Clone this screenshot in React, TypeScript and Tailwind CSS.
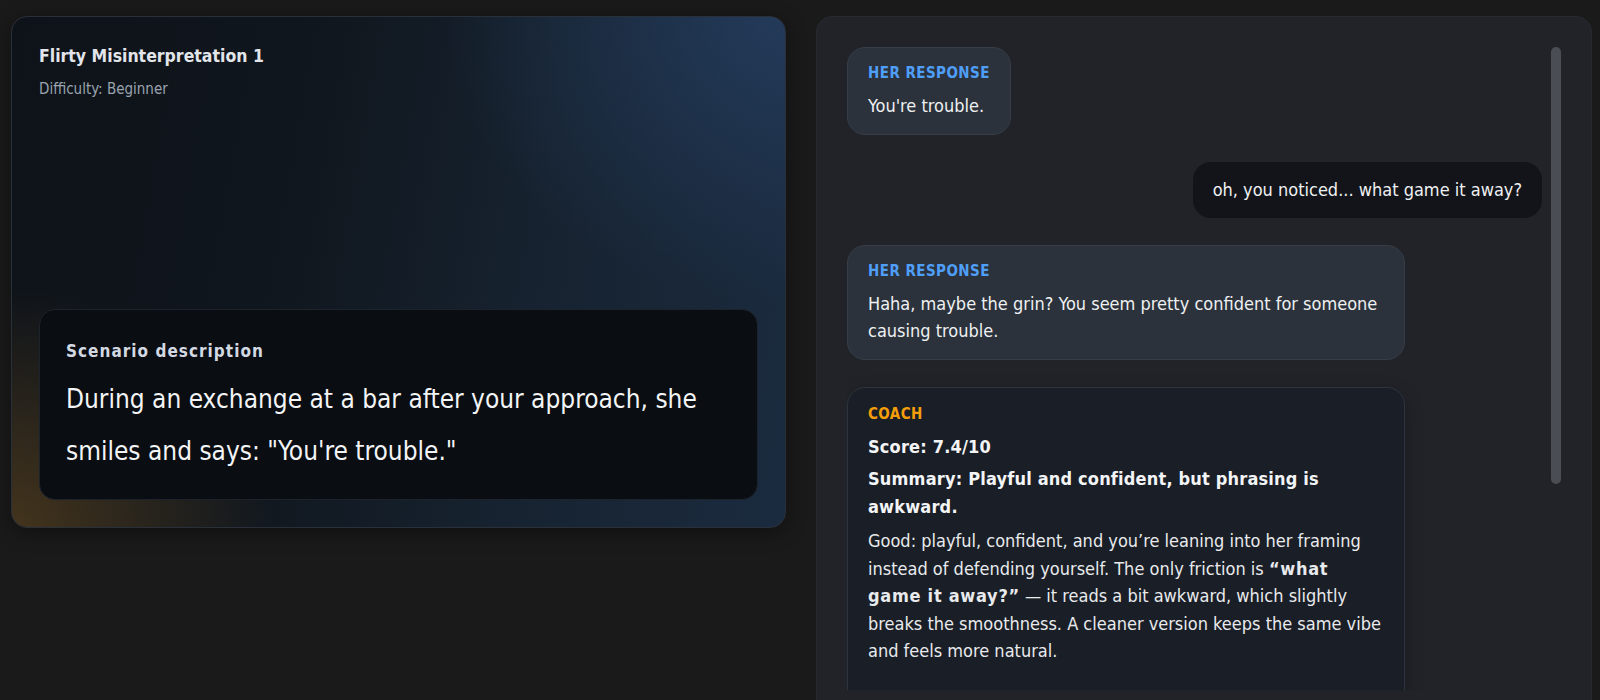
import React from "react";

const font = "font-['DejaVu_Sans_Condensed','DejaVu_Sans',sans-serif]";

function HerBubble({ text }: { text: string }) {
  return (
    <div className="self-start max-w-[558px] rounded-[18px] border border-[#363d47] bg-[#2b323b] px-5 pt-[15px] pb-[15px]">
      <div className="mb-[9px] text-[15px] font-bold leading-5 tracking-[0.03em] text-[#4f9ef8]">HER RESPONSE</div>
      <div className="text-[18px] leading-[27px] text-[#eef0f2]">{text}</div>
    </div>
  );
}

export default function App() {
  return (
    <div className={`${font} min-h-[700px] w-full bg-[#1a1a1a] pl-[11px] pr-[8px] pt-4 overflow-hidden`}>
      <div className="flex gap-[30px] items-start">
        {/* Left card */}
        <div className="relative flex h-[512px] w-[775px] shrink-0 flex-col justify-between overflow-hidden rounded-2xl border border-[#2a3039] bg-[linear-gradient(100deg,#0e1319_0%,#10161d_35%,#16222f_65%,#1b2b3f_100%)] p-[27px] shadow-[0_4px_20px_rgba(0,0,0,0.4)]">
          <div className="pointer-events-none absolute inset-0 bg-[radial-gradient(ellipse_55%_70%_at_100%_0%,rgba(38,64,100,0.75),transparent_80%)]" />
          <div className="pointer-events-none absolute inset-0 bg-[radial-gradient(ellipse_40%_55%_at_0%_100%,rgba(110,78,30,0.55),transparent_85%)]" />
          <div className="relative">
            <div className="text-[17.5px] font-bold leading-6 text-[#e2e5ea]">Flirty Misinterpretation 1</div>
            <div className="mt-[11px] text-[15px] leading-5 text-[#9aa3ae]">Difficulty: Beginner</div>
          </div>
          <div className="relative rounded-2xl border border-[#1d232c] bg-[#0a0d11] px-[26px] pt-[29px] pb-[22px]">
            <div className="text-[17px] font-bold leading-6 tracking-[0.06em] text-[#d3d9e3]">Scenario description</div>
            <div className="mt-[10px] text-[26px] leading-[52px] text-[#f3f4f6]">
              During an exchange at a bar after your approach, she smiles and says: "You're trouble."
            </div>
          </div>
        </div>

        {/* Right panel */}
        <div className="h-[740px] w-[776px] shrink-0 rounded-2xl border border-[#272a30] bg-[#212328] pl-[30px] pr-[30px] pt-[30px]">
          <div className="flex h-[643px] gap-[9px]">
            <div className="flex min-w-0 flex-1 flex-col gap-[27px] overflow-hidden">
              <HerBubble text="You're trouble." />
              <div className="self-end rounded-[18px] bg-[#121419] px-5 py-[15px] text-[18px] leading-[26px] text-[#eef0f2]">
                oh, you noticed... what game it away?
              </div>
              <HerBubble text="Haha, maybe the grin? You seem pretty confident for someone causing trouble." />
              <div className="w-[558px] shrink-0 self-start rounded-[18px] border border-[#2e343e] bg-[#1a1e26] px-5 pt-[16px] pb-[80px] shadow-[0_6px_18px_rgba(0,0,0,0.25)]">
                <div className="mb-[9px] text-[15px] font-bold leading-5 tracking-[0.03em] text-[#f59e0b]">COACH</div>
                <div className="mb-[5px] text-[18px] font-bold leading-[27px] tracking-[0.01em] text-[#f3f4f6]">Score: 7.4/10</div>
                <div className="mb-[6px] text-[18px] font-bold leading-[28px] tracking-[0.01em] text-[#f3f4f6]">
                  Summary: Playful and confident, but phrasing is awkward.
                </div>
                <div className="text-[18px] leading-[27.5px] text-[#e8eaed]">
                  Good: playful, confident, and you’re leaning into her framing instead of defending yourself. The only friction is{" "}
                  <span className="font-bold tracking-[0.04em]">“what game it away?”</span> — it reads a bit awkward, which slightly breaks the smoothness. A cleaner version keeps the same vibe and feels more natural.
                </div>
              </div>
            </div>
            <div className="w-[10px] shrink-0">
              <div className="h-[437px] w-[10px] rounded-full bg-[#4a4d53]" />
            </div>
          </div>
        </div>
      </div>
    </div>
  );
}
